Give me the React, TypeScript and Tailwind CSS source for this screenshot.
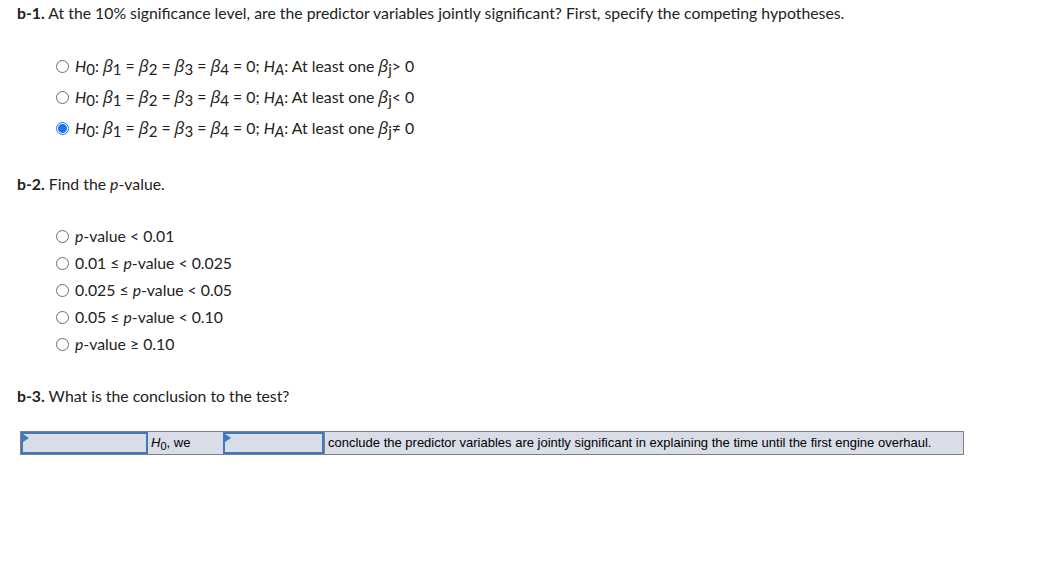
const FONT = "font-['Lato','Open_Sans',sans-serif]";

function Sub({ children }: { children: React.ReactNode }) {
  return <span className="relative top-[3px] text-[15px]">{children}</span>;
}

function Beta({ i }: { i: string }) {
  return (
    <>
      <i className="font-['Open_Sans',sans-serif] text-[17px]">β</i>
      <Sub>{i}</Sub>
    </>
  );
}

function Radio({ checked }: { checked?: boolean }) {
  if (checked) {
    return (
      <span className="inline-flex h-[13px] w-[13px] shrink-0 items-center justify-center rounded-full border border-[#1a73e8] bg-white">
        <span className="h-[9px] w-[9px] rounded-full bg-[#1a73e8]" />
      </span>
    );
  }
  return <span className="inline-block h-[13px] w-[13px] shrink-0 rounded-full border border-[#6b6b6b] bg-white" />;
}

function Hyp({ rel }: { rel: string }) {
  return (
    <span>
      <i>H</i>
      <Sub>0</Sub>: <Beta i="1" /> = <Beta i="2" /> = <Beta i="3" /> = <Beta i="4" /> = 0;{" "}
      <i>H</i>
      <Sub>
        <i>A</i>
      </Sub>
      : At least one <Beta i="j" />
      {rel} 0
    </span>
  );
}

const P = () => <i>p</i>;

const pOptions = [
  <>
    <P />-value &lt; 0.01
  </>,
  <>
    0.01 ≤ <P />-value &lt; 0.025
  </>,
  <>
    0.025 ≤ <P />-value &lt; 0.05
  </>,
  <>
    0.05 ≤ <P />-value &lt; 0.10
  </>,
  <>
    <P />-value ≥ 0.10
  </>,
];

function SelectCell({ w }: { w: string }) {
  return (
    <div className={`relative h-full ${w} border-2 border-[#3d78c0]`}>
      <span className="absolute left-0 top-0 h-0 w-0 border-y-[4px] border-l-[6px] border-y-transparent border-l-[#3d78c0]" />
    </div>
  );
}

export default function App() {
  return (
    <div className={`${FONT} min-h-[583px] bg-white px-[17px] pt-[4px] text-[15.8px] text-[#222]`}>
      <p className="h-[18px] leading-[18px]">
        <b>b-1.</b> At the 10% significance level, are the predictor variables jointly significant? First, specify the
        competing hypotheses.
      </p>

      <div className="mt-[33px] flex flex-col gap-[9px] pl-[39px]">
        {[">", "<", "≠"].map((r, i) => (
          <label key={r} className="flex h-[22px] items-center gap-[6px]">
            <Radio checked={i === 2} />
            <Hyp rel={r} />
          </label>
        ))}
      </div>

      <p className="mt-[36px] h-[18px] leading-[18px]">
        <b>b-2.</b> Find the <P />-value.
      </p>

      <div className="mt-[34px] flex flex-col gap-[9px] pl-[39px]">
        {pOptions.map((o, i) => (
          <label key={i} className="flex h-[18px] items-center gap-[6px]">
            <Radio />
            <span>{o}</span>
          </label>
        ))}
      </div>

      <p className="mt-[34px] h-[18px] leading-[18px]">
        <b>b-3.</b> What is the conclusion to the test?
      </p>

      <div className="ml-[3px] mt-[26px] flex h-[24px] w-[944px] border border-[#808080] bg-[#d9dde8] font-['Liberation_Sans',Arial,sans-serif] text-[13px] text-black">
        <SelectCell w="w-[127px]" />
        <div className="flex w-[75px] items-center px-[3px]">
          <i>H</i>
          <span className="relative top-[3px] text-[11px]">0</span>, we
        </div>
        <SelectCell w="w-[101px]" />
        <div className="flex flex-1 items-center border-l border-[#808080] px-[3px]">
          conclude the predictor variables are jointly significant in explaining the time until the first engine overhaul.
        </div>
      </div>
    </div>
  );
}
